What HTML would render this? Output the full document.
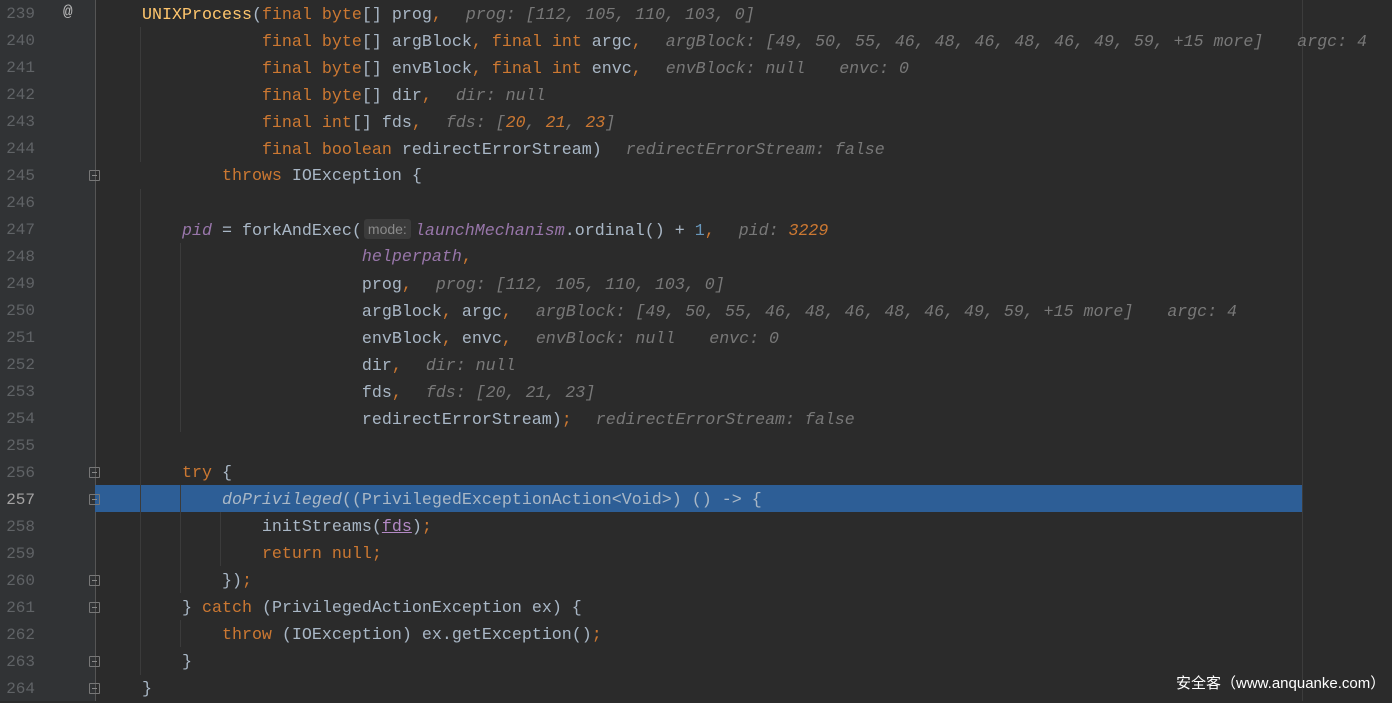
<!DOCTYPE html>
<html><head><meta charset="utf-8"><style>
*{margin:0;padding:0}
body{width:1392px;height:701px;background:#2b2b2b;overflow:hidden;position:relative;font-family:"Liberation Mono",monospace;font-size:16.67px}
.g{position:absolute;left:0;top:0;width:95px;height:701px;background:#313335}
.gl{position:absolute;left:95px;top:0;width:1px;height:701px;background:#555}
.rm{position:absolute;left:1302px;top:0;width:1px;height:701px;background:#3c3c3c}
.hl{position:absolute;left:95px;top:485px;width:1207px;height:27px;background:#2d5e96}
.ig{position:absolute;width:1px;background:#3b3b3b}
.n{position:absolute;left:0;width:35px;text-align:right;color:#606366;line-height:27px;font-size:16px;margin-top:1px}
.l{position:absolute;left:102px;white-space:pre;line-height:27px;color:#a9b7c6;margin-top:1px}
.k{color:#cc7832}.c{color:#ffc66d}.num{color:#6897bb}
.f{color:#9876aa;font-style:italic}.i{font-style:italic}
.h{color:#787878;font-style:italic;font-size:16.6px;margin-left:24px}
.h2{margin-left:34px}.o{color:#cc7832}
.fm{position:absolute;left:89px;width:11px;height:11px;border:1px solid #777;box-sizing:border-box;border-radius:1px}
.fm:after{content:"";position:absolute;left:2px;top:4px;width:5px;height:1px;background:#888}
.md{display:inline-block;background:#3b3b3b;color:#8a8a8a;font-family:"Liberation Sans",sans-serif;font-size:14px;line-height:20px;padding:0 4px;border-radius:3px;margin:0 4px 0 2px;vertical-align:1px}
.wm{position:absolute;left:1176px;top:672px;color:#fff;font-family:"Liberation Sans","Noto Sans CJK SC",sans-serif;font-size:15px}
</style></head><body>
<div class="g"></div><div class="gl"></div><div class="rm"></div>
<div class="hl"></div>
<div class="ig" style="left:140px;top:27px;height:135px"></div>
<div class="ig" style="left:140px;top:189px;height:486px"></div>
<div class="ig" style="left:180px;top:243px;height:189px"></div>
<div class="ig" style="left:180px;top:485px;height:108px"></div>
<div class="ig" style="left:220px;top:512px;height:54px"></div>
<div class="ig" style="left:180px;top:620px;height:27px"></div>
<div style="position:absolute;left:63px;top:3px;color:#bbb;font-size:16px">@</div>
<div class="fm" style="top:170px"></div>
<div class="fm" style="top:467px"></div>
<div class="fm" style="top:494px"></div>
<div class="fm" style="top:575px"></div>
<div class="fm" style="top:602px"></div>
<div class="fm" style="top:656px"></div>
<div class="fm" style="top:683px"></div>
<div class="n" style="top:0">239</div><div class="n" style="top:27px">240</div><div class="n" style="top:54px">241</div><div class="n" style="top:81px">242</div><div class="n" style="top:108px">243</div><div class="n" style="top:135px">244</div><div class="n" style="top:162px">245</div><div class="n" style="top:189px">246</div><div class="n" style="top:216px">247</div><div class="n" style="top:243px">248</div><div class="n" style="top:270px">249</div><div class="n" style="top:297px">250</div><div class="n" style="top:324px">251</div><div class="n" style="top:351px">252</div><div class="n" style="top:378px">253</div><div class="n" style="top:405px">254</div><div class="n" style="top:432px">255</div><div class="n" style="top:459px">256</div><div class="n" style="top:486px;color:#a4a3a3">257</div><div class="n" style="top:513px">258</div><div class="n" style="top:540px">259</div><div class="n" style="top:567px">260</div><div class="n" style="top:594px">261</div><div class="n" style="top:621px">262</div><div class="n" style="top:648px">263</div><div class="n" style="top:675px">264</div>
<div class="l" style="top:0">    <span class="c">UNIXProcess</span>(<span class="k">final byte</span>[] prog<span class="k">,</span><span class="h">prog: [112, 105, 110, 103, 0]</span></div>
<div class="l" style="top:27px">                <span class="k">final byte</span>[] argBlock<span class="k">, final int</span> argc<span class="k">,</span><span class="h">argBlock: [49, 50, 55, 46, 48, 46, 48, 46, 49, 59, +15 more]</span><span class="h h2">argc: 4</span></div>
<div class="l" style="top:54px">                <span class="k">final byte</span>[] envBlock<span class="k">, final int</span> envc<span class="k">,</span><span class="h">envBlock: null</span><span class="h h2">envc: 0</span></div>
<div class="l" style="top:81px">                <span class="k">final byte</span>[] dir<span class="k">,</span><span class="h">dir: null</span></div>
<div class="l" style="top:108px">                <span class="k">final int</span>[] fds<span class="k">,</span><span class="h">fds: [<span class="o">20</span>, <span class="o">21</span>, <span class="o">23</span>]</span></div>
<div class="l" style="top:135px">                <span class="k">final boolean</span> redirectErrorStream)<span class="h">redirectErrorStream: false</span></div>
<div class="l" style="top:162px">            <span class="k">throws</span> IOException {</div>
<div class="l" style="top:216px">        <span class="f">pid</span> = forkAndExec(<span class="md">mode:</span><span class="f">launchMechanism</span>.ordinal() + <span class="num">1</span><span class="k">,</span><span class="h">pid: <span class="o">3229</span></span></div>
<div class="l" style="top:243px">                          <span class="f">helperpath</span><span class="k">,</span></div>
<div class="l" style="top:270px">                          prog<span class="k">,</span><span class="h">prog: [112, 105, 110, 103, 0]</span></div>
<div class="l" style="top:297px">                          argBlock<span class="k">,</span> argc<span class="k">,</span><span class="h">argBlock: [49, 50, 55, 46, 48, 46, 48, 46, 49, 59, +15 more]</span><span class="h h2">argc: 4</span></div>
<div class="l" style="top:324px">                          envBlock<span class="k">,</span> envc<span class="k">,</span><span class="h">envBlock: null</span><span class="h h2">envc: 0</span></div>
<div class="l" style="top:351px">                          dir<span class="k">,</span><span class="h">dir: null</span></div>
<div class="l" style="top:378px">                          fds<span class="k">,</span><span class="h">fds: [20, 21, 23]</span></div>
<div class="l" style="top:405px">                          redirectErrorStream)<span class="k">;</span><span class="h">redirectErrorStream: false</span></div>
<div class="l" style="top:459px">        <span class="k">try</span> {</div>
<div class="l" style="top:486px">            <span class="i">doPrivileged</span>((PrivilegedExceptionAction&lt;Void&gt;) () -&gt; {</div>
<div class="l" style="top:513px">                initStreams(<span style="color:#b389c5;text-decoration:underline">fds</span>)<span class="k">;</span></div>
<div class="l" style="top:540px">                <span class="k">return null;</span></div>
<div class="l" style="top:567px">            })<span class="k">;</span></div>
<div class="l" style="top:594px">        } <span class="k">catch</span> (PrivilegedActionException ex) {</div>
<div class="l" style="top:621px">            <span class="k">throw</span> (IOException) ex.getException()<span class="k">;</span></div>
<div class="l" style="top:648px">        }</div>
<div class="l" style="top:675px">    }</div>
<div class="wm">安全客（www.anquanke.com）</div>
</body></html>
